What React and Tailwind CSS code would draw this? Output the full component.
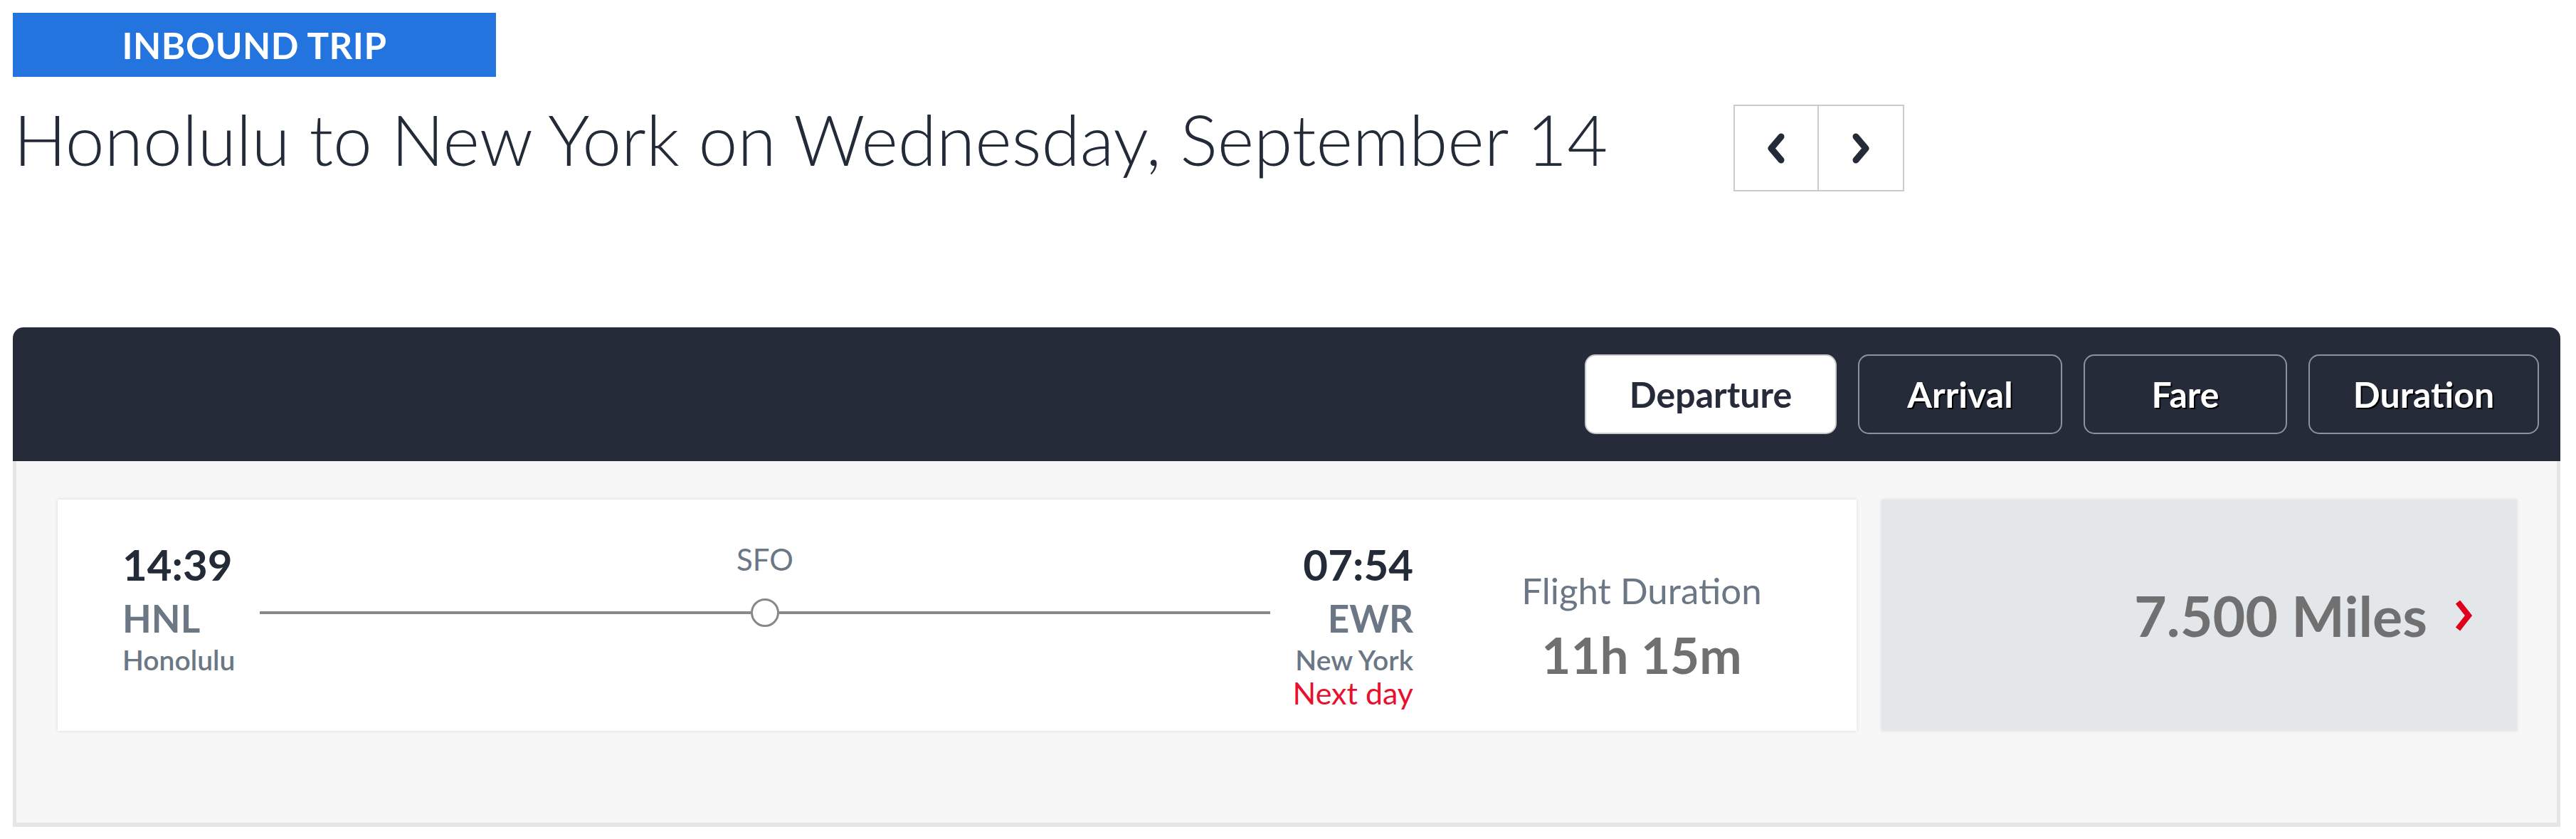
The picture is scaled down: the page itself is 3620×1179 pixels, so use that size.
import { useState } from 'react'

const font = { fontFamily: 'Lato, "Open Sans", Arial, sans-serif' }

function Chevron({ dir = 'right', className = '' }) {
  const d = dir === 'left' ? 'M22 6 L8 22.5 L22 39' : 'M8 6 L22 22.5 L8 39'
  return (
    <svg viewBox="0 0 30 45" className={className}>
      <path d={d} fill="none" stroke="currentColor" strokeWidth="9" strokeLinecap="round" strokeLinejoin="round" />
    </svg>
  )
}

const sorts = [
  { label: 'Departure', w: 'w-[354px]' },
  { label: 'Arrival', w: 'w-[287px]' },
  { label: 'Fare', w: 'w-[286px]' },
  { label: 'Duration', w: 'w-[324px]' },
]

export default function App() {
  const [active, setActive] = useState('Departure')

  return (
    <div className="w-[3620px] h-[1179px] bg-white overflow-hidden pt-[18px] pl-[18px] pr-[22px]" style={font}>
      <div className="w-[679px] h-[90px] bg-[#2474e0] flex items-center justify-center">
        <span className="text-white font-bold text-[51px] leading-none tracking-[0.5px]">INBOUND TRIP</span>
      </div>

      <div className="flex items-start mt-[27px] h-[134px]">
        <h1 className="w-[2418px] text-[98.5px] leading-[120px] font-light text-[#232a38] pl-[1px]">
          Honolulu to New York on Wednesday, September 14
        </h1>
        <div className="mt-[12px] flex border-2 border-[#cbcbcb] h-[122px]">
          <button className="w-[118px] h-full flex items-center justify-center text-[#232a38] border-r-2 border-[#cbcbcb]">
            <Chevron dir="left" className="w-[30px] h-[45px]" />
          </button>
          <button className="w-[118px] h-full flex items-center justify-center text-[#232a38]">
            <Chevron className="w-[30px] h-[45px]" />
          </button>
        </div>
      </div>

      <div className="mt-[191px] h-[188px] bg-[#252b39] rounded-t-[15px] flex items-center justify-end gap-[30px] pr-[30px]">
        {sorts.map((s) => {
          const on = s.label === active
          return (
            <button
              key={s.label}
              onClick={() => setActive(s.label)}
              className={`${s.w} h-[112px] rounded-[15px] border-2 text-[50px] font-bold flex items-center justify-center ${
                on
                  ? 'bg-white border-[#c9c9c9] text-[#252b39]'
                  : 'border-[#8d929b] text-white [text-shadow:2px_2px_0_#000]'
              }`}
            >
              {s.label}
            </button>
          )
        })}
      </div>

      <div className="bg-[#f7f7f7] border-x-[5px] border-b-[6px] border-[#e6e6e6] pt-[54px] pl-[58px] pr-[56px] pb-[129px] flex gap-[35px]">
        <div className="flex-1 h-[325px] bg-white shadow-[0_0_5px_rgba(0,0,0,0.12)] flex items-start pt-[54px] pl-[91px] pr-[82px]">
          <div className="w-[193px] flex flex-col">
            <span className="text-[60px] leading-[74px] font-bold text-[#232a38]">14:39</span>
            <span className="text-[53px] leading-[78px] font-bold text-[#6b7785]">HNL</span>
            <span className="text-[39px] leading-[38px] font-semibold text-[#6b7785]">Honolulu</span>
          </div>

          <div className="flex-1 flex flex-col items-center">
            <span className="mt-[5px] text-[42px] leading-[50px] text-[#6b7785]">SFO</span>
            <div className="mt-[30px] w-full h-[40px] flex items-center">
              <div className="flex-1 h-[4px] bg-[#888888]" />
              <div className="w-[40px] h-[40px] rounded-full border-[3px] border-[#888888] bg-white" />
              <div className="flex-1 h-[4px] bg-[#888888]" />
            </div>
          </div>

          <div className="w-[201px] flex flex-col items-end">
            <span className="text-[60px] leading-[74px] font-bold text-[#232a38]">07:54</span>
            <span className="text-[53px] leading-[78px] font-bold text-[#6b7785]">EWR</span>
            <span className="text-[39px] leading-[38px] font-semibold text-[#6b7785] whitespace-nowrap">New York</span>
            <span className="mt-[4px] text-[43px] leading-[48px] text-[#e8112d] whitespace-nowrap">Next day</span>
          </div>

          <div className="ml-[101px] w-[440px] flex flex-col items-center">
            <span className="mt-[44px] text-[51px] leading-[60px] text-[#6b7785] whitespace-nowrap">Flight Duration</span>
            <span className="mt-[18px] text-[71px] leading-[84px] font-bold text-[#707070] whitespace-nowrap">11h 15m</span>
          </div>
        </div>

        <div className="w-[893px] h-[325px] bg-[#e4e7ea] shadow-[0_0_5px_rgba(0,0,0,0.1)] flex items-center justify-end pr-[62px] gap-[38px]">
          <span className="text-[79px] leading-none font-bold text-[#707070]">7.500 Miles</span>
          <svg viewBox="0 0 26 46" className="w-[26px] h-[46px] text-[#e0001b]">
            <path d="M5 4 L20 23 L5 42" fill="none" stroke="currentColor" strokeWidth="8" strokeLinejoin="miter" />
          </svg>
        </div>
      </div>
    </div>
  )
}
